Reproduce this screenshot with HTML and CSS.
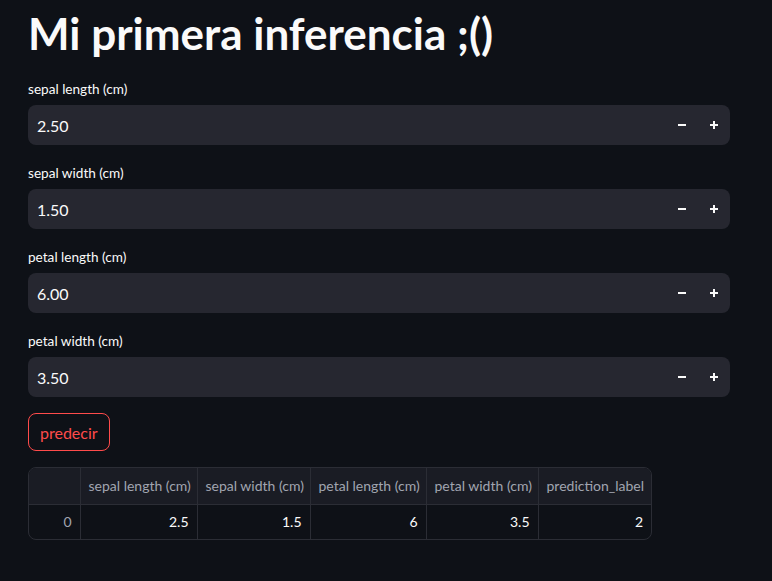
FILE: index.html
```html
<!DOCTYPE html>
<html lang="es">
<head>
<meta charset="utf-8">
<title>Mi primera inferencia</title>
<link rel="stylesheet" href="styles.css">
</head>
<body>
<main class="app">
  <h1 class="title">Mi primera inferencia ;()</h1>

  <div class="field">
    <label class="label">sepal length (cm)</label>
    <div class="num-input">
      <span class="value">2.50</span>
      <span class="step"><svg width="8" height="8" viewBox="0 0 8 8"><rect x="0" y="3" width="8" height="2" fill="#fafafa"/></svg></span>
      <span class="step"><svg width="8" height="8" viewBox="0 0 8 8"><rect x="0" y="3" width="8" height="2" fill="#fafafa"/><rect x="3" y="0" width="2" height="8" fill="#fafafa"/></svg></span>
    </div>
  </div>

  <div class="field">
    <label class="label">sepal width (cm)</label>
    <div class="num-input">
      <span class="value">1.50</span>
      <span class="step"><svg width="8" height="8" viewBox="0 0 8 8"><rect x="0" y="3" width="8" height="2" fill="#fafafa"/></svg></span>
      <span class="step"><svg width="8" height="8" viewBox="0 0 8 8"><rect x="0" y="3" width="8" height="2" fill="#fafafa"/><rect x="3" y="0" width="2" height="8" fill="#fafafa"/></svg></span>
    </div>
  </div>

  <div class="field">
    <label class="label">petal length (cm)</label>
    <div class="num-input">
      <span class="value">6.00</span>
      <span class="step"><svg width="8" height="8" viewBox="0 0 8 8"><rect x="0" y="3" width="8" height="2" fill="#fafafa"/></svg></span>
      <span class="step"><svg width="8" height="8" viewBox="0 0 8 8"><rect x="0" y="3" width="8" height="2" fill="#fafafa"/><rect x="3" y="0" width="2" height="8" fill="#fafafa"/></svg></span>
    </div>
  </div>

  <div class="field">
    <label class="label">petal width (cm)</label>
    <div class="num-input">
      <span class="value">3.50</span>
      <span class="step"><svg width="8" height="8" viewBox="0 0 8 8"><rect x="0" y="3" width="8" height="2" fill="#fafafa"/></svg></span>
      <span class="step"><svg width="8" height="8" viewBox="0 0 8 8"><rect x="0" y="3" width="8" height="2" fill="#fafafa"/><rect x="3" y="0" width="2" height="8" fill="#fafafa"/></svg></span>
    </div>
  </div>

  <div class="btn-row">
    <button class="btn">predecir</button>
  </div>

  <div class="table-wrap">
    <table class="df">
      <thead>
        <tr>
          <th class="c-idx"></th>
          <th class="c1">sepal length (cm)</th>
          <th class="c2">sepal width (cm)</th>
          <th class="c3">petal length (cm)</th>
          <th class="c4">petal width (cm)</th>
          <th class="c5">prediction_label</th>
        </tr>
      </thead>
      <tbody>
        <tr>
          <td class="idx">0</td>
          <td>2.5</td>
          <td>1.5</td>
          <td>6</td>
          <td>3.5</td>
          <td>2</td>
        </tr>
      </tbody>
    </table>
  </div>
</main>
</body>
</html>
```

FILE: styles.css
```css
html, body {
  margin: 0;
  padding: 0;
  background: #0e1117;
}

body {
  font-family: "Lato", "Liberation Sans", sans-serif;
  color: #fafafa;
}

.app {
  width: 702px;
  padding: 0 42px 40px 28px;
  display: flex;
  flex-direction: column;
  gap: 16px;
}

.title {
  margin: 0;
  height: 61px;
  padding-top: 5px;
  box-sizing: border-box;
  font-size: 44px;
  font-weight: 700;
  line-height: 56px;
  color: #fafafa;
}

.field {
  display: flex;
  flex-direction: column;
  gap: 4px;
}

.label {
  height: 24px;
  display: flex;
  align-items: center;
  font-size: 13.6px;
  color: #fafafa;
}

.num-input {
  height: 40px;
  border-radius: 8px;
  background: #262730;
  display: flex;
  align-items: center;
}

.value {
  flex: 1;
  padding-left: 9px;
  font-size: 16px;
}

.step {
  width: 32px;
  height: 40px;
  display: flex;
  align-items: center;
  justify-content: center;
}

.btn-row {
  display: flex;
}

.btn {
  height: 38px;
  padding: 0 11px;
  border: 1px solid #ff4b4b;
  border-radius: 8px;
  background: #0e1117;
  color: #ff4b4b;
  font-family: inherit;
  font-size: 16px;
}

.table-wrap {
  width: 622px;
  border: 1px solid #2b2d35;
  border-radius: 8px;
  overflow: hidden;
}

.df {
  width: 100%;
  border-collapse: collapse;
  table-layout: fixed;
  font-size: 14px;
}

.df th, .df td {
  box-sizing: border-box;
}

.df th {
  height: 36px;
  background: #1a1c24;
  color: #a1a5b0;
  font-weight: 400;
  text-align: left;
  padding: 0 8px;
  border-right: 1px solid #2b2d35;
  border-bottom: 1px solid #2b2d35;
  white-space: nowrap;
  overflow: hidden;
}

.df td {
  height: 35px;
  text-align: right;
  padding: 0 8px;
  border-right: 1px solid #2b2d35;
  color: #fafafa;
}

.df th:last-child, .df td:last-child {
  border-right: none;
}

.df td.idx {
  color: #a1a5b0;
}

.c-idx { width: 51px; }
.c1 { width: 117px; }
.c2 { width: 113px; }
.c3 { width: 116px; }
.c4 { width: 112px; }
.c5 { width: 113px; }
```
